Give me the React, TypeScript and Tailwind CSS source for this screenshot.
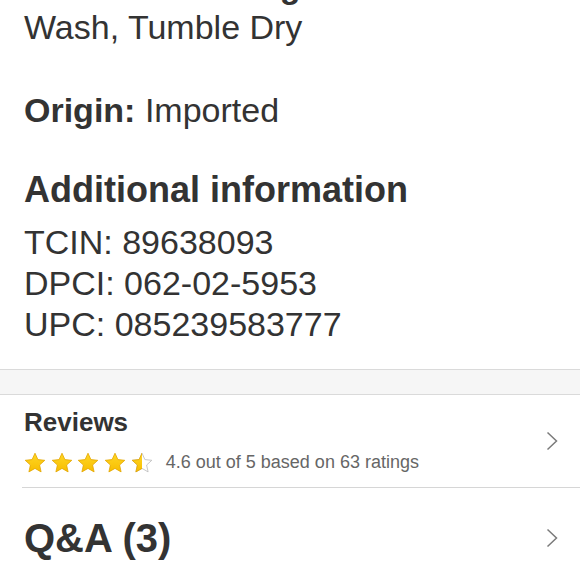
import type { ReactNode } from 'react'

const font = "font-['Liberation_Sans',Arial,Helvetica,sans-serif]"

function Star({ fill, id }: { fill: 'full' | 'half'; id: string }) {
  const d =
    'M11 1.2 L13.9 7.6 L20.8 8.3 L15.6 13 L17.1 19.9 L11 16.4 L4.9 19.9 L6.4 13 L1.2 8.3 L8.1 7.6 Z'
  return (
    <svg width="22" height="21" viewBox="0 0 22 21" className="shrink-0">
      <defs>
        <linearGradient id={`g-${id}`} x1="0" y1="0" x2="0" y2="1">
          <stop offset="0" stopColor="#ffd726" />
          <stop offset="1" stopColor="#f7bd00" />
        </linearGradient>
        <clipPath id={`c-${id}`}>
          <rect x="0" y="0" width="11" height="21" />
        </clipPath>
      </defs>
      {fill === 'full' ? (
        <path d={d} fill={`url(#g-${id})`} stroke="#e3a600" strokeWidth="0.8" strokeLinejoin="round" />
      ) : (
        <>
          <path d={d} fill="#ffffff" stroke="#b9b9b9" strokeWidth="0.8" strokeLinejoin="round" />
          <path
            d={d}
            fill={`url(#g-${id})`}
            stroke="#e3a600"
            strokeWidth="0.8"
            strokeLinejoin="round"
            clipPath={`url(#c-${id})`}
          />
        </>
      )}
    </svg>
  )
}

function Chevron() {
  return (
    <svg width="12" height="20" viewBox="0 0 12 20" className="shrink-0">
      <path d="M1.5 1.5 L10.5 10 L1.5 18.5" fill="none" stroke="#7a7a7a" strokeWidth="1.5" />
    </svg>
  )
}

function Row({ children, className }: { children: ReactNode; className?: string }) {
  return <div className={`flex items-center justify-between pr-[22px] ${className ?? ''}`}>{children}</div>
}

export default function App() {
  return (
    <div className={`h-[580px] w-[580px] overflow-hidden bg-white text-[#333333] ${font}`}>
      <div className="px-6">
        <div className="mt-[-34px] text-[34px] leading-[41px]">
          <p>
            <span className="font-bold tracking-[1px]">Care &amp; Cleaning:</span> Machine
          </p>
          <p>Wash, Tumble Dry</p>
        </div>
        <p className="mt-[42px] text-[34px] leading-[41px]">
          <span className="font-bold">Origin:</span> Imported
        </p>
        <h2 className="mt-[38px] text-[36px] font-bold leading-[41px]">Additional information</h2>
        <div className="mt-[12px] text-[34px] leading-[41px]">
          <p>TCIN: 89638093</p>
          <p>DPCI: 062-02-5953</p>
          <p>UPC: 085239583777</p>
        </div>
      </div>

      <div className="mt-6 h-[26px] border-y border-[#dadada] bg-[#f6f6f6]" />

      <div className="ml-[22px] border-b border-[#d6d6d6]">
        <Row className="pb-[14px] pl-[2px] pt-[13px]">
          <div>
            <h3 className="text-[26px] font-bold leading-[29px]">Reviews</h3>
            <div className="mt-[15px] flex h-[21px] items-center">
              <div className="flex gap-[4.7px]">
                <Star fill="full" id="a" />
                <Star fill="full" id="b" />
                <Star fill="full" id="c" />
                <Star fill="full" id="d" />
                <Star fill="half" id="e" />
              </div>
              <span className="ml-[13px] text-[18px] leading-[21px] text-[#666666]">
                4.6 out of 5 based on 63 ratings
              </span>
            </div>
          </div>
          <Chevron />
        </Row>
      </div>

      <Row className="pb-[22px] pl-6 pt-[26px]">
        <h3 className="text-[40px] font-bold leading-[48px]">Q&amp;A (3)</h3>
        <Chevron />
      </Row>
    </div>
  )
}
